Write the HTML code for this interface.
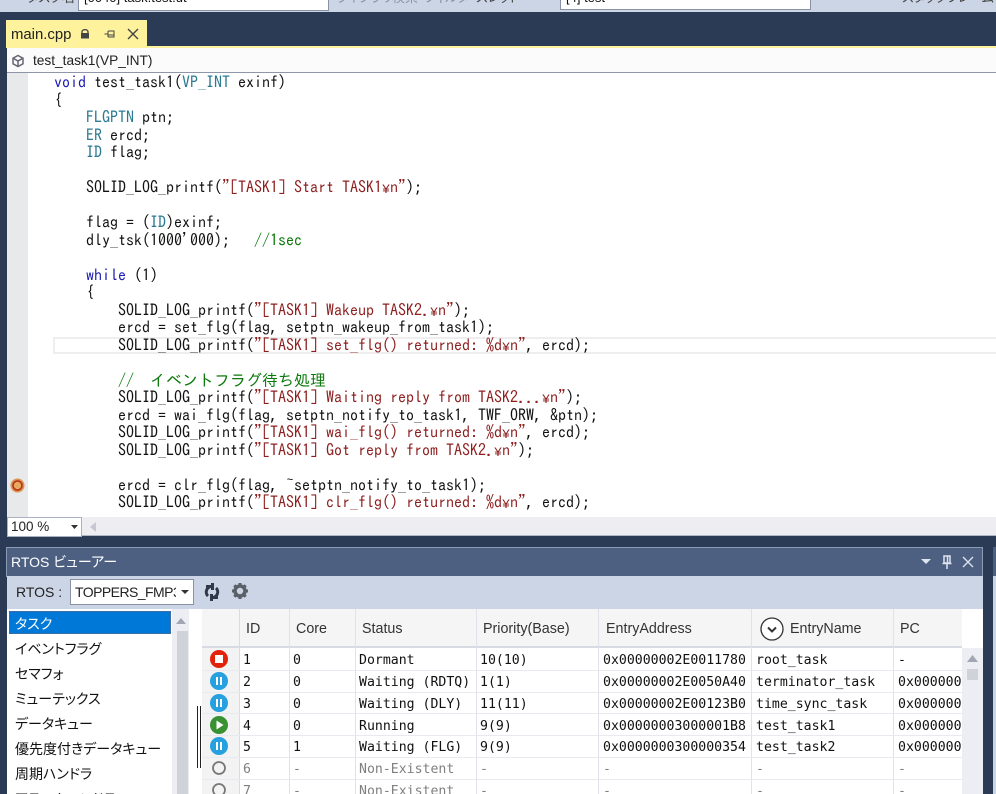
<!DOCTYPE html>
<html lang="ja"><head><meta charset="utf-8"><title>main.cpp</title>
<style>
html,body{margin:0;padding:0;background:#2b3a55}
#p{position:relative;width:996px;height:794px;overflow:hidden;background:#2b3a55;font-family:"Liberation Sans","Noto Sans CJK JP",sans-serif;color:#1e1e1e;font-feature-settings:"palt"}
#p div,#p svg{position:absolute}
.t{white-space:pre;line-height:18px}
.c{font-family:"IPAGothic","Liberation Mono",monospace;font-size:16px;line-height:18px;white-space:pre;color:#111;left:54px;font-feature-settings:normal}
.c i{font-style:normal;font-family:"Liberation Mono",monospace;font-size:13.333px}
.k{color:#1a1ab0}.y{color:#2b7a91}.s{color:#8f2020}.g{color:#0a7a0a}
.h{font-size:14.3px;color:#333;top:620px;line-height:18px;white-space:pre}
.m{font-family:"DejaVu Sans Mono","Liberation Mono",monospace;font-size:13.2px;line-height:18px;white-space:pre;color:#111;margin-top:2px}
.n{color:#808080}
.l{font-size:14px;left:15px;line-height:18px;white-space:pre;color:#111;margin-top:1px}
.hl{height:1px;left:202px;width:760px;background:#e8eaf0}
.vl{width:1px;background:#dfe2ea}
.tt{font-size:13px;line-height:14px;top:-9px;white-space:pre;color:#444}
</style></head><body><div id="p">
<!-- top toolbar -->
<div style="left:0;top:0;width:996px;height:12px;background:#ccd5e6"></div>
<div class="tt" style="left:27px">タスク名</div>
<div style="left:78px;top:-4px;width:249px;height:13px;background:#fff;border:1px solid #8a93a6"></div>
<div class="tt" style="left:84px;color:#111">[0040] task.test.ut</div>
<div class="tt" style="left:336px;color:#8a90a0">ライブラリ検索・フィルタ</div>
<div class="tt" style="left:476px">スレッド</div>
<div style="left:560px;top:-4px;width:249px;height:12px;background:#fff;border:1px solid #8a93a6"></div>
<div class="tt" style="left:566px;color:#111">[4] test</div>
<div class="tt" style="left:902px">スタックフレーム</div>
<!-- tab -->
<div style="left:6px;top:20px;width:141px;height:26px;background:#fff29d"></div>
<div class="t" style="left:11px;top:26px;font-size:14.9px;color:#222">main.cpp</div>
<svg style="left:80px;top:29px" width="10" height="11" viewBox="0 0 10 11"><path d="M2 4V3a3 2.4 0 0 1 6 0v1" fill="none" stroke="#444" stroke-width="1.3"/><rect x="1" y="4" width="8" height="5.5" fill="#444"/></svg>
<svg style="left:104px;top:28px" width="12" height="12" viewBox="0 0 12 12"><path d="M0.5 6H4M4 3v6M4 3h6v6H4M4 7h6" fill="none" stroke="#444" stroke-width="1"/></svg>
<svg style="left:127px;top:28px" width="12" height="12" viewBox="0 0 12 12"><path d="M1 1l10 10M11 1L1 11" stroke="#444" stroke-width="1.4"/></svg>
<div style="left:6px;top:46px;width:990px;height:2px;background:#fff29d"></div>
<!-- nav bar -->
<div style="left:7px;top:48px;width:989px;height:25px;background:#fbfbfb;border-bottom:1px solid #8f96a8;box-sizing:border-box"></div>
<svg style="left:11px;top:54px" width="14" height="14" viewBox="0 0 14 14"><path d="M7 1.500l5 2.700v5.600l-5 2.700-5-2.700V4.200zM2 4.200l5 2.800 5-2.800M7 7v5.500" fill="none" stroke="#667" stroke-width="1.500"/></svg>
<div class="t" style="left:33px;top:52px;font-size:13.7px;color:#222">test_task1(VP_INT)</div>
<!-- editor -->
<div style="left:7px;top:73px;width:989px;height:444px;background:#fff"></div>
<div style="left:7px;top:73px;width:21px;height:444px;background:#e8e9ea"></div>
<div style="left:53px;top:337px;width:943px;height:17px;border:2px solid #eeeeee;border-right:0;box-sizing:border-box"></div>
<div class="c" style="top:73px"><span class="k">void</span> test_task1(<span class="y">VP_INT</span> exinf)</div>
<div class="c" style="top:91px">{</div>
<div class="c" style="top:108px">    <span class="y">FLGPTN</span> ptn;</div>
<div class="c" style="top:126px">    <span class="y">ER</span> ercd;</div>
<div class="c" style="top:143px">    <span class="y">ID</span> flag;</div>
<div class="c" style="top:178px">    SOLID_LOG_printf(<span class="s">"[TASK1] Start TASK1<i>¥</i>n"</span>);</div>
<div class="c" style="top:213px">    flag = (<span class="y">ID</span>)exinf;</div>
<div class="c" style="top:231px">    dly_tsk(1000'000);   <span class="g">//1sec</span></div>
<div class="c" style="top:266px">    <span class="k">while</span> (1)</div>
<div class="c" style="top:283px">    {</div>
<div class="c" style="top:301px">        SOLID_LOG_printf(<span class="s">"[TASK1] Wakeup TASK2.<i>¥</i>n"</span>);</div>
<div class="c" style="top:318px">        ercd = set_flg(flag, setptn_wakeup_from_task1);</div>
<div class="c" style="top:336px">        SOLID_LOG_printf(<span class="s">"[TASK1] set_flg() returned: %d<i>¥</i>n"</span>, ercd);</div>
<div class="c" style="top:371px">        <span class="g">//  イベントフラグ待ち処理</span></div>
<div class="c" style="top:388px">        SOLID_LOG_printf(<span class="s">"[TASK1] Waiting reply from TASK2...<i>¥</i>n"</span>);</div>
<div class="c" style="top:406px">        ercd = wai_flg(flag, setptn_notify_to_task1, TWF_ORW, &amp;ptn);</div>
<div class="c" style="top:423px">        SOLID_LOG_printf(<span class="s">"[TASK1] wai_flg() returned: %d<i>¥</i>n"</span>, ercd);</div>
<div class="c" style="top:441px">        SOLID_LOG_printf(<span class="s">"[TASK1] Got reply from TASK2.<i>¥</i>n"</span>);</div>
<div class="c" style="top:476px">        ercd = clr_flg(flag, ~setptn_notify_to_task1);</div>
<div class="c" style="top:493px">        SOLID_LOG_printf(<span class="s">"[TASK1] clr_flg() returned: %d<i>¥</i>n"</span>, ercd);</div>
<svg style="left:10px;top:478px" width="15" height="15" viewBox="0 0 15 15"><circle cx="7.500" cy="7.500" r="7" fill="#d9964f"/><circle cx="7.500" cy="7.500" r="4.500" fill="#e8a860" stroke="#b52a1a" stroke-width="1.500"/></svg>
<!-- zoom bar -->
<div style="left:7px;top:517px;width:989px;height:19px;background:#eeeef2;border-bottom:1px solid #b0b6c4;box-sizing:border-box"></div>
<div style="left:7px;top:517px;width:75px;height:20px;background:#fff;border:1px solid #aab1c0;box-sizing:border-box"></div>
<div class="t" style="left:11px;top:518px;font-size:13.500px;color:#222">100 %</div>
<svg style="left:71px;top:525px" width="8" height="5"><path d="M0 0h7L3.500 4z" fill="#333"/></svg>
<svg style="left:90px;top:522px" width="6" height="10"><path d="M6 0v10L0 5z" fill="#c5c8d2"/></svg>
<!-- panel -->
<div style="left:6px;top:547px;width:977px;height:30px;background:#4d6082;border:1px solid #8b9ab5;border-bottom:0;box-sizing:border-box"></div>
<div class="t" style="left:11px;top:553px;font-size:14px;color:#fff">RTOS ビューアー</div>
<svg style="left:921px;top:559px" width="11" height="6"><path d="M0 0h10L5 5z" fill="#dfe5f0"/></svg>
<svg style="left:941px;top:555px" width="12" height="15" viewBox="0 0 12 15"><path d="M3 1h6v7H3zM6.500 1v7M1.500 8.500h9M6 9v5" fill="none" stroke="#dfe5f0" stroke-width="1.500"/></svg>
<svg style="left:962px;top:556px" width="12" height="12"><path d="M1 1l10 10M11 1L1 11" stroke="#dfe5f0" stroke-width="1.300"/></svg>
<div style="left:993px;top:547px;width:3px;height:247px;background:#4d6082"></div>
<div style="left:993px;top:576px;width:3px;height:218px;background:#ccd5e6"></div>
<!-- toolbar -->
<div style="left:7px;top:576px;width:976px;height:218px;background:#ccd5e6"></div>
<div class="t" style="left:16px;top:583px;font-size:14px;color:#222">RTOS :</div>
<div style="left:70px;top:579px;width:124px;height:26px;background:#fff;border:1px solid #8a93a6;box-sizing:border-box"></div>
<div class="t" style="left:75px;top:583px;width:101px;overflow:hidden;font-size:14px;letter-spacing:-.55px;color:#222">TOPPERS_FMP3</div>
<svg style="left:181px;top:590px" width="9" height="5"><path d="M0 0h8L4 4z" fill="#333"/></svg>
<svg style="left:203px;top:583px" width="18" height="18" viewBox="0 0 18 18"><path d="M9 3.500A5.500 5.500 0 0 0 5 13M9 14.500A5.500 5.500 0 0 0 13 5" fill="none" stroke="#2f3a48" stroke-width="3"/><path d="M8 0h3v7H8zM7 11h3v7H7zM3 2h5v3H3zM10 13h5v3h-5z" fill="#2f3a48"/></svg>
<svg style="left:231px;top:582px" width="18" height="18" viewBox="0 0 18 18"><circle cx="9" cy="9" r="5" fill="none" stroke="#5b6068" stroke-width="3.500"/><path d="M9 1v3M9 14v3M1 9h3M14 9h3M3.300 3.300l2.200 2.200M12.500 12.500l2.200 2.200M14.700 3.300l-2.200 2.200M5.500 12.500l-2.200 2.200" stroke="#5b6068" stroke-width="3"/></svg>
<!-- list -->
<div style="left:7px;top:609px;width:165px;height:185px;background:#fff"></div>
<div style="left:172px;top:609px;width:30px;height:185px;background:#fff"></div>
<div style="left:9px;top:611px;width:162px;height:23px;background:#0078d7;border:1px solid #3a6ea5;box-sizing:border-box"></div>
<div class="l" style="top:614px;color:#fff">タスク</div>
<div class="l" style="top:639px">イベントフラグ</div>
<div class="l" style="top:664px">セマフォ</div>
<div class="l" style="top:689px">ミューテックス</div>
<div class="l" style="top:714px">データキュー</div>
<div class="l" style="top:739px">優先度付きデータキュー</div>
<div class="l" style="top:764px">周期ハンドラ</div>
<div class="l" style="top:789px">アラームハンドラ</div>
<div style="left:172px;top:609px;width:17px;height:185px;background:#eceef3"></div>
<svg style="left:176px;top:618px" width="11" height="6"><path d="M0 6h10L5 0z" fill="#a0a6b4"/></svg>
<div style="left:177px;top:631px;width:11px;height:163px;background:#d0d2da"></div>
<div style="left:197px;top:706px;width:1px;height:62px;background:#222"></div>
<div style="left:200px;top:706px;width:1px;height:62px;background:#222"></div>
<!-- table -->
<div style="left:202px;top:609px;width:781px;height:185px;background:#fff"></div>
<div style="left:202px;top:609px;width:760px;height:39px;background:#f5f5f6;border-bottom:2px solid #d8dbe4;box-sizing:border-box"></div>
<div style="left:202px;top:648px;width:37px;height:146px;background:#f3f3f4"></div>
<div style="left:962px;top:609px;width:21px;height:39px;background:#fff"></div>
<div style="left:962px;top:648px;width:21px;height:146px;background:#eceef3"></div>
<svg style="left:967px;top:655px" width="12" height="7"><path d="M0 7h11L5.500 0z" fill="#a0a6b4"/></svg>
<div style="left:967px;top:669px;width:11px;height:11px;background:#d0d2da"></div>
<div class="vl" style="left:239px;top:609px;height:185px;background:#d8dbe4"></div>
<div class="vl" style="left:289px;top:609px;height:185px"></div>
<div class="vl" style="left:355px;top:609px;height:185px"></div>
<div class="vl" style="left:476px;top:609px;height:185px"></div>
<div class="vl" style="left:598px;top:609px;height:185px"></div>
<div class="vl" style="left:751px;top:609px;height:185px"></div>
<div class="vl" style="left:893px;top:609px;height:185px"></div>
<div class="hl" style="top:670px"></div><div class="hl" style="top:692px"></div><div class="hl" style="top:713px"></div><div class="hl" style="top:735px"></div><div class="hl" style="top:757px"></div><div class="hl" style="top:779px"></div>
<div class="h" style="left:246px">ID</div>
<div class="h" style="left:296px">Core</div>
<div class="h" style="left:362px">Status</div>
<div class="h" style="left:483px">Priority(Base)</div>
<div class="h" style="left:606px">EntryAddress</div>
<div class="h" style="left:790px">EntryName</div>
<div class="h" style="left:900px">PC</div>
<svg style="left:760px;top:617px" width="24" height="24" viewBox="0 0 24 24"><circle cx="12" cy="12" r="11" fill="#fff" stroke="#333" stroke-width="1.300"/><path d="M8 10.500l4 4 4-4" fill="none" stroke="#333" stroke-width="2"/></svg>
<!-- icons -->
<svg style="left:210px;top:650px" width="18" height="18" viewBox="0 0 18 18"><circle cx="9" cy="9" r="9" fill="#e1230b"/><rect x="5" y="5" width="8" height="8" fill="#fff"/></svg>
<svg style="left:210px;top:672px" width="18" height="18" viewBox="0 0 18 18"><circle cx="9" cy="9" r="9" fill="#27a0e0"/><path d="M6 5h2v8H6zM10 5h2v8h-2z" fill="#fff"/></svg>
<svg style="left:210px;top:694px" width="18" height="18" viewBox="0 0 18 18"><circle cx="9" cy="9" r="9" fill="#27a0e0"/><path d="M6 5h2v8H6zM10 5h2v8h-2z" fill="#fff"/></svg>
<svg style="left:210px;top:716px" width="18" height="18" viewBox="0 0 18 18"><circle cx="9" cy="9" r="9" fill="#389132"/><path d="M6.500 4.500l7 4.500-7 4.500z" fill="#fff"/></svg>
<svg style="left:210px;top:737px" width="18" height="18" viewBox="0 0 18 18"><circle cx="9" cy="9" r="9" fill="#27a0e0"/><path d="M6 5h2v8H6zM10 5h2v8h-2z" fill="#fff"/></svg>
<svg style="left:212px;top:761px" width="14" height="14" viewBox="0 0 14 14"><circle cx="7" cy="7" r="6" fill="none" stroke="#777" stroke-width="1.800"/></svg>
<svg style="left:212px;top:783px" width="14" height="14" viewBox="0 0 14 14"><circle cx="7" cy="7" r="6" fill="none" stroke="#777" stroke-width="1.800"/></svg>
<!-- rows -->
<div class="m" style="left:243px;top:650px">1</div><div class="m" style="left:293px;top:650px">0</div><div class="m" style="left:359px;top:650px">Dormant</div><div class="m" style="left:480px;top:650px">10(10)</div><div class="m" style="left:603px;top:650px">0x00000002E0011780</div><div class="m" style="left:756px;top:650px">root_task</div><div class="m" style="left:898px;top:650px">-</div>
<div class="m" style="left:243px;top:672px">2</div><div class="m" style="left:293px;top:672px">0</div><div class="m" style="left:359px;top:672px">Waiting (RDTQ)</div><div class="m" style="left:480px;top:672px">1(1)</div><div class="m" style="left:603px;top:672px">0x00000002E0050A40</div><div class="m" style="left:756px;top:672px">terminator_task</div><div class="m" style="left:898px;top:672px">0x000000</div>
<div class="m" style="left:243px;top:694px">3</div><div class="m" style="left:293px;top:694px">0</div><div class="m" style="left:359px;top:694px">Waiting (DLY)</div><div class="m" style="left:480px;top:694px">11(11)</div><div class="m" style="left:603px;top:694px">0x00000002E00123B0</div><div class="m" style="left:756px;top:694px">time_sync_task</div><div class="m" style="left:898px;top:694px">0x000000</div>
<div class="m" style="left:243px;top:716px">4</div><div class="m" style="left:293px;top:716px">0</div><div class="m" style="left:359px;top:716px">Running</div><div class="m" style="left:480px;top:716px">9(9)</div><div class="m" style="left:603px;top:716px">0x00000003000001B8</div><div class="m" style="left:756px;top:716px">test_task1</div><div class="m" style="left:898px;top:716px">0x000000</div>
<div class="m" style="left:243px;top:737px">5</div><div class="m" style="left:293px;top:737px">1</div><div class="m" style="left:359px;top:737px">Waiting (FLG)</div><div class="m" style="left:480px;top:737px">9(9)</div><div class="m" style="left:603px;top:737px">0x0000000300000354</div><div class="m" style="left:756px;top:737px">test_task2</div><div class="m" style="left:898px;top:737px">0x000000</div>
<div class="m n" style="left:243px;top:759px">6</div><div class="m n" style="left:293px;top:759px">-</div><div class="m n" style="left:359px;top:759px">Non-Existent</div><div class="m n" style="left:480px;top:759px">-</div><div class="m n" style="left:603px;top:759px">-</div><div class="m n" style="left:756px;top:759px">-</div><div class="m n" style="left:898px;top:759px">-</div>
<div class="m n" style="left:243px;top:781px">7</div><div class="m n" style="left:293px;top:781px">-</div><div class="m n" style="left:359px;top:781px">Non-Existent</div><div class="m n" style="left:480px;top:781px">-</div><div class="m n" style="left:603px;top:781px">-</div><div class="m n" style="left:756px;top:781px">-</div><div class="m n" style="left:898px;top:781px">-</div>
</div></body></html>
